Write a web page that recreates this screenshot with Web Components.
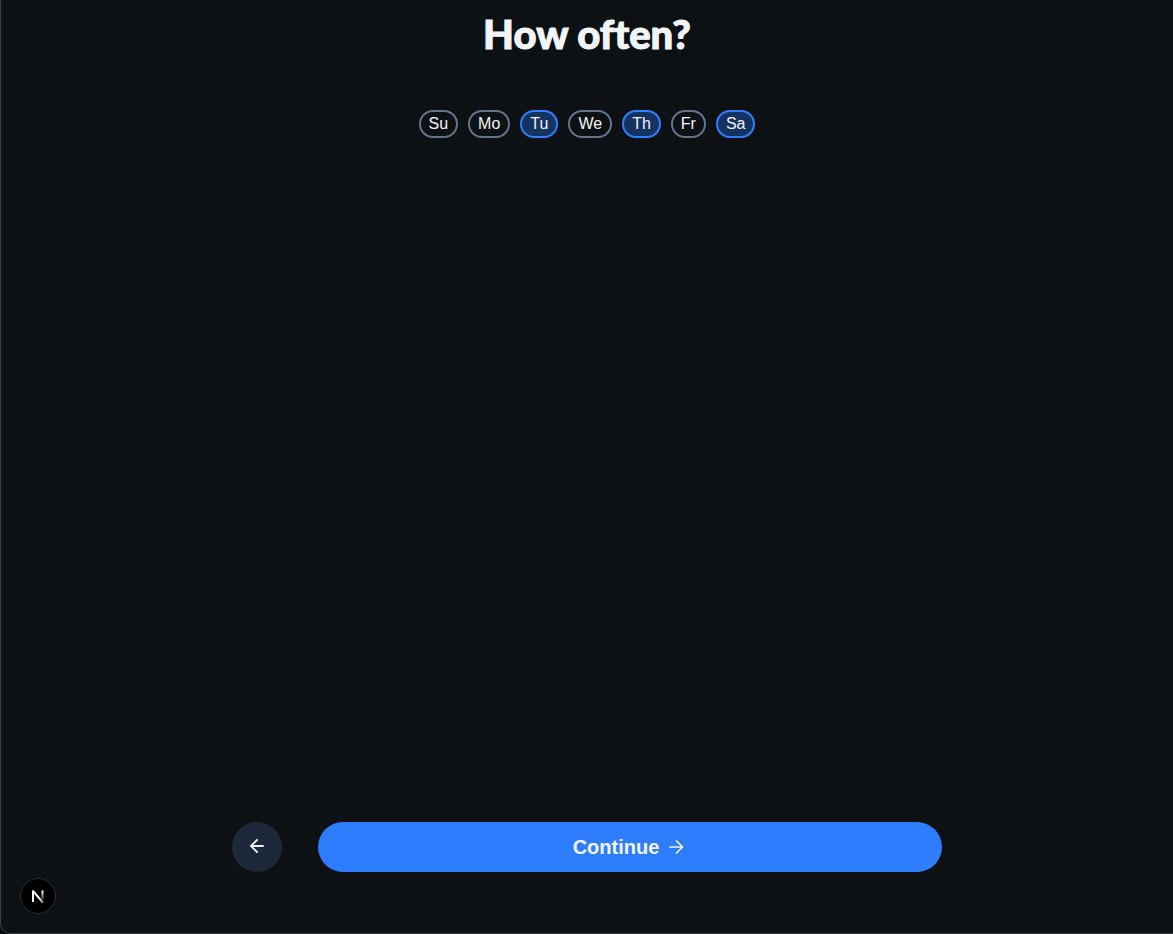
<!DOCTYPE html>
<html lang="en">
<head>
<meta charset="utf-8">
<meta name="viewport" content="width=device-width, initial-scale=1">
<title>How often?</title>
<style>
  html { background: #000; }
  body { margin: 0; font-family: "Liberation Sans", Arial, sans-serif; color: #f1f5f9; }
</style>
</head>
<body>
<schedule-page>
  <span slot="title">How often?</span>
  <day-picker>
    <day-chip>Su</day-chip>
    <day-chip>Mo</day-chip>
    <day-chip checked>Tu</day-chip>
    <day-chip>We</day-chip>
    <day-chip checked>Th</day-chip>
    <day-chip>Fr</day-chip>
    <day-chip checked>Sa</day-chip>
  </day-picker>
  <step-nav slot="footer">Continue</step-nav>
  <dev-badge slot="badge"></dev-badge>
</schedule-page>
<script>
const define = (name, html, setup) => {
  const template = document.createElement('template');
  template.innerHTML = html;
  customElements.define(name, class extends HTMLElement {
    constructor() {
      super();
      this.attachShadow({ mode: 'open' }).append(template.content.cloneNode(true));
    }
    connectedCallback() { if (setup) setup(this); }
  });
};

define('schedule-page', `
  <style>
    :host {
      box-sizing: border-box; position: relative;
      display: flex; flex-direction: column; align-items: center;
      min-height: 100vh; padding: 10px 20px 61px;
      background: #0d1113; border: solid #3a3d41; border-width: 0 0 1px 1px;
      border-bottom-left-radius: 10px;
    }
    h1 {
      margin: 0 0 52px; font: 900 40px/48px "Lato Black", Lato, sans-serif;
      font-variant-ligatures: none; -webkit-text-stroke: 1px currentColor;
    }
    main { flex: 1; }
    footer { width: 100%; max-width: 710px; }
    .badge { position: absolute; left: 19px; bottom: 19px; }
  </style>
  <h1><slot name="title"></slot></h1>
  <main><slot></slot></main>
  <footer><slot name="footer"></slot></footer>
  <div class="badge"><slot name="badge"></slot></div>`);

define('day-picker', `
  <style>
    :host { display: block; }
    div { display: flex; flex-wrap: wrap; justify-content: center; gap: 10px; }
  </style>
  <div role="group" aria-label="Days of the week"><slot></slot></div>`);

define('day-chip', `
  <style>
    :host { display: block; }
    label {
      display: block; position: relative; padding: 0 8px;
      border: 2px solid #64748b; border-radius: 14px;
      font-size: 16px; line-height: 24px; cursor: pointer;
    }
    label:has(:checked) { border-color: #2f7fff; background: #143360; }
    label:has(:focus-visible) { outline: 2px solid #fff; outline-offset: 2px; }
    input { position: absolute; inset: 0; margin: 0; opacity: 0; cursor: pointer; }
  </style>
  <label><input type="checkbox"><slot></slot></label>`,
  el => { el.shadowRoot.querySelector('input').checked = el.hasAttribute('checked'); });

define('step-nav', `
  <style>
    :host { display: flex; gap: 36px; }
    button {
      display: flex; align-items: center; justify-content: center;
      height: 50px; padding: 0; border: 0; border-radius: 25px;
      color: inherit; font: bold 20px/24px "Liberation Sans", Arial, sans-serif; cursor: pointer;
    }
    .back { flex: 0 0 50px; background: #1d293b; }
    .next { flex: 1; gap: 8px; background: #2f7dff; }
    svg { fill: none; stroke: currentColor; stroke-linecap: round; stroke-linejoin: round; }
  </style>
  <button class="back" type="button" aria-label="Back">
    <svg width="20" height="20" viewBox="0 0 20 20" stroke-width="1.8"><path d="M16 9H4M10 3L4 9l6 6"/></svg>
  </button>
  <button class="next" type="button"><slot></slot>
    <svg width="20" height="20" viewBox="0 0 20 20" stroke-width="1.7"><path d="M3 10h12.3M9.5 4l6 6-6 6"/></svg>
  </button>`);

define('dev-badge', `
  <style>
    :host { display: block; }
    button {
      box-sizing: border-box; display: grid; place-items: center;
      width: 36px; height: 36px; padding: 0;
      border: 1px solid #2a2c2e; border-radius: 50%; background: #000;
    }
  </style>
  <button type="button" aria-label="Developer tools">
    <svg width="34" height="34" viewBox="0 0 34 34" fill="none" stroke-width="2">
      <defs>
        <linearGradient id="diag" gradientUnits="userSpaceOnUse" x1="18" y1="18" x2="23" y2="24"><stop stop-color="#fff"/><stop offset="1" stop-color="#fff" stop-opacity=".5"/></linearGradient>
        <linearGradient id="stem" gradientUnits="userSpaceOnUse" x1="22" y1="12" x2="22" y2="22"><stop stop-color="#fff"/><stop offset="1" stop-color="#fff" stop-opacity=".1"/></linearGradient>
      </defs>
      <path d="M12 23V11.5" stroke="#fff"/>
      <path d="M12 11.8L21.8 23.5" stroke="url(#diag)"/>
      <path d="M21.5 11.5v9" stroke="url(#stem)"/>
    </svg>
  </button>`);
</script>
</body>
</html>
